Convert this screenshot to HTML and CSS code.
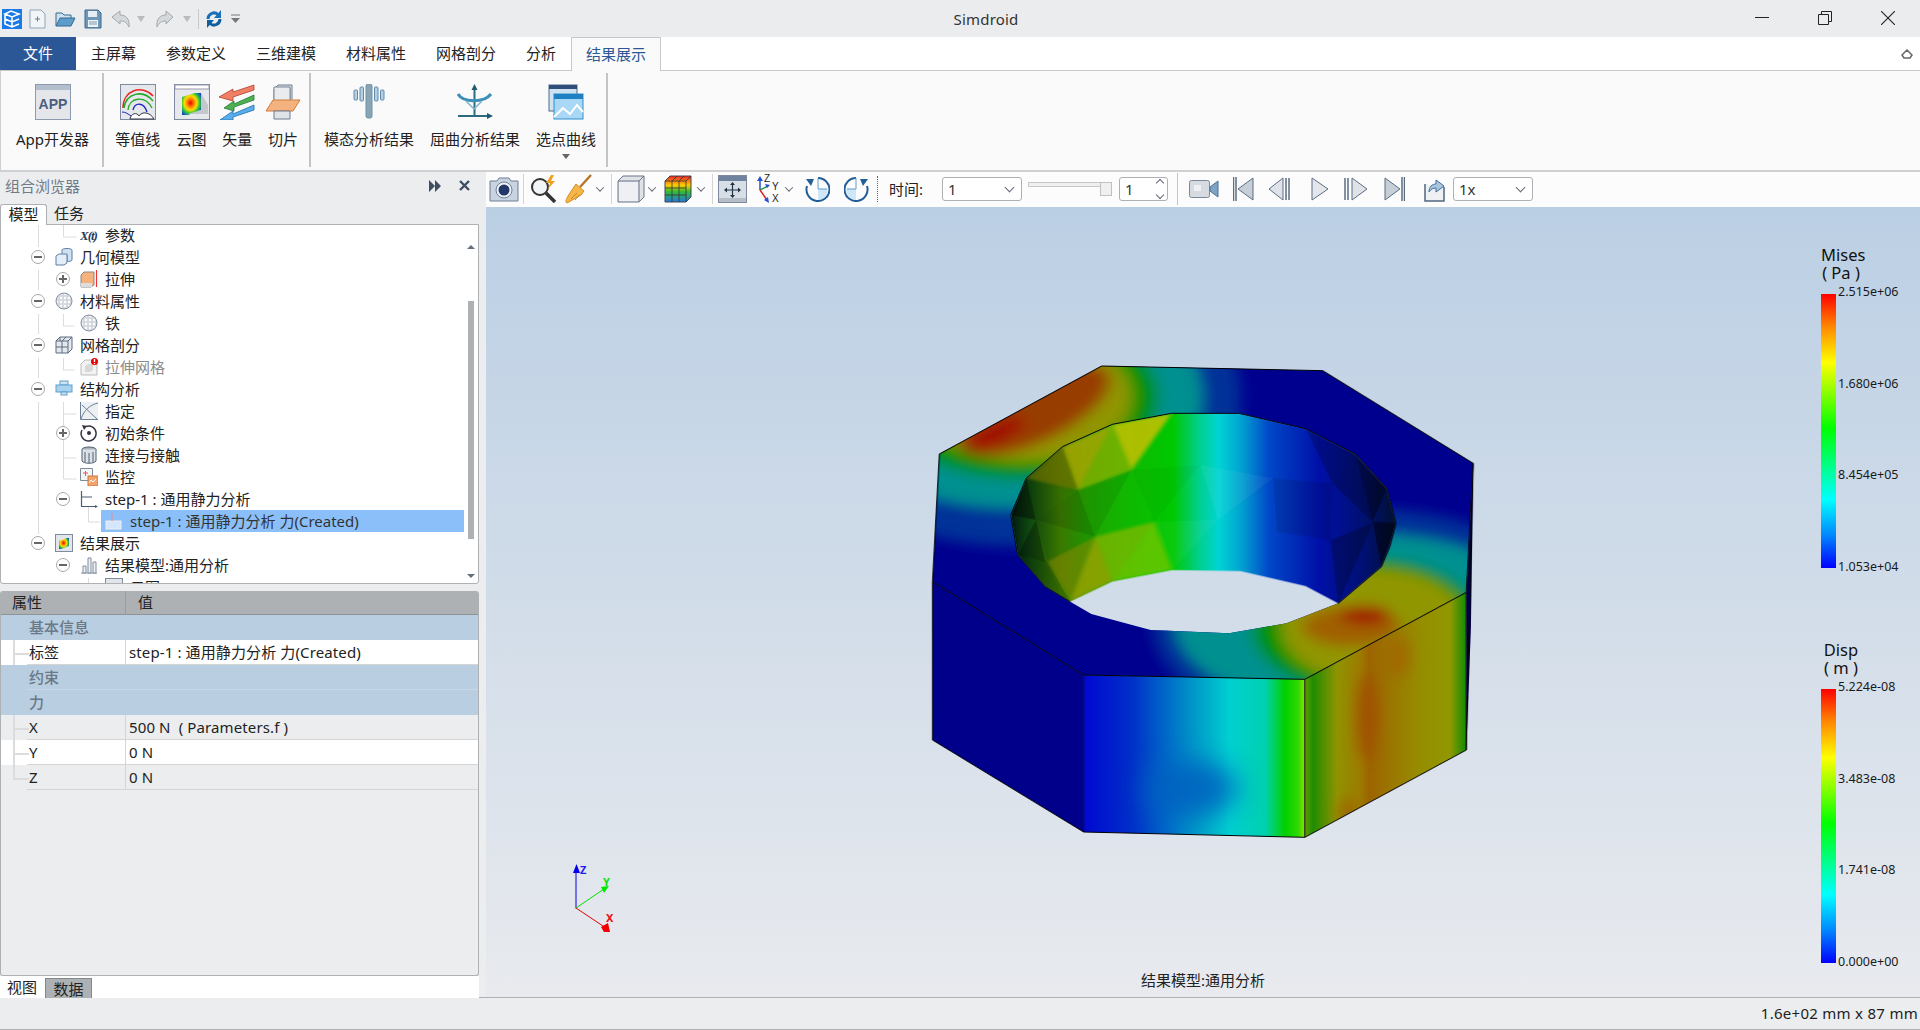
FILE: index.html
```html
<!DOCTYPE html>
<html lang="zh-CN">
<head>
<meta charset="utf-8">
<title>Simdroid</title>
<link rel="stylesheet" href="styles.css">
</head>
<body>
<div class="app">

  <header class="titlebar">
    <div class="qat">
      <svg class="q-logo" width="20" height="20" viewBox="0 0 20 20"><rect width="20" height="20" fill="#1c7ae6"/><path d="M3 5l6-3 8 3-7 3zM3 5v10l7 3 7-3M3 10l7 3 7-3M10 8v10" fill="none" stroke="#fff" stroke-width="1.6"/></svg>
      <svg class="q-new" width="17" height="20" viewBox="0 0 17 20"><path d="M1 1h11l4 4v14H1z" fill="#f2f5f8" stroke="#8fa3b5"/><path d="M6 10h5M8.500 7.500v5" stroke="#6a7f92"/></svg>
      <svg class="q-open" width="21" height="18" viewBox="0 0 21 18"><path d="M1 16V3h6l2 2h7v3" fill="#cfe0ee" stroke="#35688f"/><path d="M1 16l4-8h15l-4 8z" fill="#5d9ccb" stroke="#35688f"/></svg>
      <svg class="q-save" width="18" height="20" viewBox="0 0 18 20"><path d="M1 1h13l3 3v15H1z" fill="#6e97b8" stroke="#3f6a8c"/><rect x="4" y="2" width="9" height="6" fill="#e6eef4"/><rect x="4" y="11" width="10" height="7" fill="#eef3f7"/><path d="M5 13h8M5 15h8" stroke="#7d98ad"/></svg>
      <svg class="q-undo" width="20" height="18" viewBox="0 0 20 18"><path d="M1 7l8-6v4c6 0 10 4 9 12-2-4-4-6-9-6v3z" fill="#d5d8db" stroke="#a4a9ae"/></svg>
      <i class="q-caret q-c1"></i>
      <svg class="q-redo" width="18" height="18" viewBox="0 0 18 18"><path d="M17 7l-7-6v4C4 5 0 9 1 17c2-4 4-6 9-6v3z" fill="#d5d8db" stroke="#a4a9ae"/></svg>
      <i class="q-caret q-c2"></i>
      <i class="q-sep"></i>
      <svg class="q-sync" width="16" height="20" viewBox="0 0 16 20"><path d="M2 10a6 6 0 0 1 10-4.500" fill="none" stroke="#1a70b8" stroke-width="3"/><path d="M15 1v8H8z" fill="#1a70b8"/><path d="M14 10a6 6 0 0 1-10 4.500" fill="none" stroke="#0f5f9f" stroke-width="3"/><path d="M1 19v-8h7z" fill="#0f5f9f"/></svg>
      <svg class="q-more" width="9" height="9" viewBox="0 0 9 9"><path d="M0 1h9" stroke="#777"/><path d="M0 4h9L4.500 9z" fill="#777"/></svg>
    </div>
    <div class="title-text">Simdroid</div>
    <div class="winbtns">
      <svg width="14" height="14" viewBox="0 0 14 14"><path d="M0 6.500h14" stroke="#222"/></svg>
      <svg width="14" height="14" viewBox="0 0 14 14"><path d="M.5 3.500h10v10H.5zM3.500 3.500V.5h10v10h-3" fill="none" stroke="#222"/></svg>
      <svg width="14" height="14" viewBox="0 0 14 14"><path d="M0 0l14 14M14 0L0 14" stroke="#222" stroke-width="1.100"/></svg>
    </div>
  </header>

  <nav class="tabs">
    <div class="tab file">文件</div>
    <div class="tab">主屏幕</div>
    <div class="tab">参数定义</div>
    <div class="tab">三维建模</div>
    <div class="tab">材料属性</div>
    <div class="tab">网格剖分</div>
    <div class="tab">分析</div>
    <div class="tab active">结果展示</div>
    <svg class="collapse" width="12" height="11" viewBox="0 0 12 11"><path d="M1 6l5-5 5 5-2 3H3z" fill="none" stroke="#666" stroke-width="1.500"/></svg>
  </nav>

  <section class="ribbon">
    <div class="rgroup g1">
      <div class="ritem w100">
        <svg class="ric" viewBox="0 0 36 36"><rect x=".5" y=".5" width="35" height="35" fill="#e4e6ea" stroke="#8d9bb0"/><rect x="1" y="1" width="34" height="5" fill="#b4bfce"/><text x="18" y="25" text-anchor="middle" class="app-mark">APP</text></svg>
        <span>App开发器</span>
      </div>
    </div>
    <div class="rgroup g2">
      <div class="ritem w56">
        <svg class="ric" viewBox="0 0 36 36"><rect x=".5" y=".5" width="35" height="35" fill="#e4e7eb" stroke="#7f8ba0"/><path d="M3 24C3 6 22 0 33 12" fill="none" stroke="#e22" stroke-width="1.500"/><path d="M4 24C6 9 23 5 33 17" fill="none" stroke="#2a2" stroke-width="1.500"/><path d="M8 26C9 13 25 11 32 24" fill="none" stroke="#2a2" stroke-width="1.300"/><path d="M13 26c2-8 11-8 14 2" fill="none" stroke="#22b" stroke-width="1.300"/><path d="M2 28c4 0 6 2 9 4" fill="none" stroke="#22b"/><path d="M10 35c1-6 7-7 9-3 3-5 11-4 15 3z" fill="#fff" stroke="#334"/></svg>
        <span>等值线</span>
      </div>
      <div class="ritem w52">
        <svg class="ric" viewBox="0 0 36 36"><defs><radialGradient id="heat" cx=".45" cy=".45" r=".65"><stop offset="0" stop-color="#e00"/><stop offset=".3" stop-color="#f80"/><stop offset=".5" stop-color="#fd0"/><stop offset=".72" stop-color="#3c3"/><stop offset="1" stop-color="#14c"/></radialGradient><pattern id="dots" width="4" height="4" patternUnits="userSpaceOnUse"><circle cx="2" cy="2" r="1.200" fill="#fff"/></pattern></defs><rect x=".5" y=".5" width="35" height="35" fill="#e6e8ec" stroke="#7f8ba0"/><path d="M1 1h34v4H1z" fill="#fff" stroke="#99a"/><path d="M8 13l13-4h6v17l-13 5H8z" fill="url(#heat)"/><path d="M27 9l7 12v9H14l13-4z" fill="#c4c8cc"/></svg>
        <span>云图</span>
      </div>
      <div class="ritem w40">
        <svg class="ric" viewBox="0 0 36 36"><path d="M0 13l14-8v3l21-7v5L14 13v4z" fill="#ef8064" stroke="#b04030" stroke-width=".8"/><path d="M5 24l10-7v3l20-9v5L15 23v4z" fill="#50b050" stroke="#207838" stroke-width=".8"/><path d="M1 36l13-9v3l21-9v5L14 33v3z" fill="#58aeea" stroke="#2070b0" stroke-width=".8"/></svg>
        <span>矢量</span>
      </div>
      <div class="ritem w52">
        <svg class="ric" viewBox="0 0 36 36"><path d="M9 5l4-4h14v14H9z" fill="#d8dce2" stroke="#6c7a90"/><path d="M27 1v14l-2 2V5z" fill="#aab2bd"/><path d="M9 3h16v14H9z" fill="#e9ebee" stroke="#7a879b"/><path d="M8 16L1 27h27l7-11z" fill="#f3b27e" stroke="#d07a3a"/><path d="M9 27h16v8H9z" fill="#dfe3e8" stroke="#6c7a90"/></svg>
        <span>切片</span>
      </div>
    </div>
    <div class="rgroup g3">
      <div class="ritem w96">
        <svg class="ric" viewBox="0 0 36 36"><rect x="15" y="0" width="6" height="34" rx="2" fill="#8aa4b4" stroke="#6f95a8"/><rect x="9" y="3" width="3.500" height="14" rx="1" fill="#b8cfe0" stroke="#5f8db0"/><rect x="23.500" y="3" width="3.500" height="14" rx="1" fill="#b8cfe0" stroke="#5f8db0"/><rect x="3" y="6" width="3.500" height="10" rx="1" fill="#b8cfe0" stroke="#5f8db0"/><rect x="29.500" y="6" width="3.500" height="10" rx="1" fill="#b8cfe0" stroke="#5f8db0"/></svg>
        <span>模态分析结果</span>
      </div>
      <div class="ritem w116">
        <svg class="ric" viewBox="0 0 36 36"><path d="M17.500 3v29" stroke="#2c6a80" stroke-width="2"/><path d="M17.500 0l-3 6h6z" fill="#1e5a70"/><path d="M1 32h30" stroke="#2c6a80" stroke-width="2"/><path d="M36 32l-6-3v6z" fill="#1e5a70"/><path d="M1 10c5 9 26 9 33 0" fill="none" stroke="#3e8fb8" stroke-width="3"/><path d="M9 17l8 8 8-8" fill="none" stroke="#7fb2cc" stroke-width="1.500"/></svg>
        <span>屈曲分析结果</span>
      </div>
      <div class="ritem w66">
        <svg class="ric" viewBox="0 0 36 36"><rect x="1" y="1" width="28" height="26" fill="#cfe2f2" stroke="#4e6a8a"/><rect x="1" y="1" width="28" height="4" fill="#2f4f7a"/><rect x="6" y="10" width="29" height="25" fill="#a9d8f6" stroke="#2e8fcd"/><rect x="6" y="10" width="29" height="5" fill="#1f80c4"/><path d="M6 33l9-9 7 6 7-9 6 7" fill="none" stroke="#fff" stroke-width="2"/></svg>
        <span>选点曲线</span>
        <i class="r-caret"></i>
      </div>
    </div>
  </section>

  <main class="main">
    <aside class="left">
      <div class="dock-head">
        <span class="dock-title">组合浏览器</span>
        <svg class="dock-ic" width="12" height="12" viewBox="0 0 12 12"><path d="M0 0l6 6-6 6zM6 0l6 6-6 6z" fill="#3f4e60"/></svg>
        <svg class="dock-ic dock-x" width="11" height="11" viewBox="0 0 11 11"><path d="M1 1l9 9M10 1l-9 9" stroke="#3f4e60" stroke-width="2.400"/></svg>
      </div>
      <div class="ltabs"><div class="ltab on">模型</div><div class="ltab">任务</div></div>

      <div class="tree">
        <svg class="guides" width="120" height="360" viewBox="0 0 120 360"><path d="M38.500 0v22M38.500 45v20M38.500 89v20M38.500 133v20M38.500 177v132M63.500 0v12h13M63.500 89v12h11M63.500 133v12h11M63.500 177v12h13M63.500 188v45h13M63.500 220v34h13M88.500 281v16h12M88.500 353v7" fill="none" stroke="#dcdcdc"/></svg>
        <div class="tlist">
          <div class="row l1"><i class="tog none"></i><svg class="tic" viewBox="0 0 18 18"><text x="0" y="14" class="xt-mark">X(t)</text></svg><span>参数</span></div>
          <div class="row l0"><i class="tog"></i><svg class="tic" viewBox="0 0 18 18"><path d="M7 2c0-2 10-2 10 0v10c0 1-3 2-5 1V7H7z" fill="#cfe2f2" stroke="#5c7fa5"/><path d="M1 8l3-2h8v9l-3 2H1z" fill="#e3eef8" stroke="#5c7fa5"/></svg><span>几何模型</span></div>
          <div class="row l1"><i class="tog plus"></i><svg class="tic" viewBox="0 0 18 18"><path d="M1 5l3-3h10v13l-3 2H1z" fill="#f5b27c" stroke="#888"/><path d="M1 13h11v4H1z" fill="#ddd"/><path d="M16.500 0v17" stroke="#e33" stroke-width="1.200"/></svg><span>拉伸</span></div>
          <div class="row l0"><i class="tog"></i><svg class="tic" viewBox="0 0 18 18"><circle cx="9" cy="9" r="8" fill="#d4d8de" stroke="#8793a6"/><circle cx="9" cy="9" r="7" fill="url(#dots)"/></svg><span>材料属性</span></div>
          <div class="row l1"><i class="tog none"></i><svg class="tic" viewBox="0 0 18 18"><circle cx="9" cy="9" r="8" fill="#d4d8de" stroke="#8793a6"/><circle cx="9" cy="9" r="7" fill="url(#dots)"/></svg><span>铁</span></div>
          <div class="row l0"><i class="tog"></i><svg class="tic" viewBox="0 0 18 18"><path d="M1 5l4-4h12v12l-4 4H1z" fill="#e4e8ee" stroke="#5d6a7e"/><path d="M1 5h12v12M13 5l4-4M7 5v12M1 11h12M5 1v4M11 1l-4 4" fill="none" stroke="#5d6a7e"/></svg><span>网格剖分</span></div>
          <div class="row l1 dim"><i class="tog none"></i><svg class="tic" viewBox="0 0 18 18"><path d="M1 6l4-4h9l3 3v12H1z" fill="#f2f2f2" stroke="#bbb"/><path d="M5 8l3-2h5v6l-3 2H5z" fill="#d8d8d8"/><circle cx="14.500" cy="3.500" r="3.500" fill="#e80000"/><path d="M14.500 1v3" stroke="#fff" stroke-width="1.400"/><path d="M14.500 5v1" stroke="#fff" stroke-width="1.400"/></svg><span>拉伸网格</span></div>
          <div class="row l0"><i class="tog"></i><svg class="tic" viewBox="0 0 18 18"><rect x="5" y="1" width="8" height="4" fill="#cfe2f2" stroke="#5f9fcc"/><rect x="1" y="5" width="16" height="7" fill="#a9d2ee" stroke="#5f9fcc"/><rect x="6" y="12" width="6" height="3" fill="#cfe2f2" stroke="#5f9fcc"/></svg><span>结构分析</span></div>
          <div class="row l1"><i class="tog none"></i><svg class="tic" viewBox="0 0 18 18"><rect width="18" height="18" fill="#edf0f3"/><path d="M.5 0v17.500H18" fill="none" stroke="#6d8199"/><path d="M1 17C4 8 10 3 18 1M2 3l15 14" fill="none" stroke="#6d8199"/></svg><span>指定</span></div>
          <div class="row l1"><i class="tog plus"></i><svg class="tic" viewBox="0 0 18 18"><path d="M6 2.500A7.500 7.500 0 1 1 2 6" fill="none" stroke="#334" stroke-width="1.500"/><path d="M2 1l5 1-3 4z" fill="#334"/><circle cx="9" cy="9" r="2" fill="#334"/></svg><span>初始条件</span></div>
          <div class="row l1"><i class="tog none"></i><svg class="tic" viewBox="0 0 18 18"><ellipse cx="9" cy="3.500" rx="7" ry="2.500" fill="#a9b4bd" stroke="#50606e"/><path d="M2 3.500V15c2 3 12 3 14 0V3.500" fill="#dbe1e6" stroke="#50606e"/><path d="M5 6v10M9 7v10M13 6v10" stroke="#50606e"/></svg><span>连接与接触</span></div>
          <div class="row l1"><i class="tog none"></i><svg class="tic" viewBox="0 0 18 18"><path d="M.5.500h12v12H.5z" fill="#f3f5f7" stroke="#7f8b98"/><path d="M3 5h5M5.500 3v5" stroke="#e55"/><rect x="8" y="8" width="10" height="10" fill="#f2a46c" stroke="#d0753a"/><path d="M9 15l2-3 2 2 3-3" fill="none" stroke="#fff"/></svg><span>监控</span></div>
          <div class="row l1"><i class="tog"></i><svg class="tic" viewBox="0 0 18 18"><path d="M1.500 1v15.500H17" fill="none" stroke="#4a5d73" stroke-width="1.200"/><path d="M2 7h10" stroke="#4a5d73"/><path d="M15 15l3 1.500-3 1.500z" fill="#4a5d73"/></svg><span>step-1 : 通用静力分析</span></div>
          <div class="row sel"><svg class="tic" viewBox="0 0 18 18"><rect x="1" y="9" width="15" height="8" fill="#d3e6fb" stroke="#eee"/><path d="M7 1v8" stroke="#e88"/></svg><span>step-1 : 通用静力分析 力(Created)</span></div>
          <div class="row l0"><i class="tog"></i><svg class="tic" viewBox="0 0 18 18"><rect x=".5" y=".5" width="17" height="17" fill="#e2e5e9" stroke="#7f8ba0"/><path d="M4 7l8-3h2v8l-8 3H4z" fill="url(#heat)"/></svg><span>结果展示</span></div>
          <div class="row l1"><i class="tog"></i><svg class="tic" viewBox="0 0 18 18"><path d="M1 17h16" stroke="#889"/><path d="M3 10h3v7H3zM8 2h3v15H8zM13 6h3v11h-3z" fill="#eef1f4" stroke="#7f8ba0"/></svg><span>结果模型:通用分析</span></div>
          <div class="row l2"><svg class="tic" viewBox="0 0 18 18"><rect x=".5" y=".5" width="17" height="17" fill="#e2e5e9" stroke="#7f8ba0"/></svg><span>云图</span></div>
        </div>
        <div class="vscroll">
          <i class="arrow-up"></i>
          <i class="thumb"></i>
          <i class="arrow-down"></i>
        </div>
      </div>

      <div class="props">
        <div class="p-head"><div class="pc1">属性</div><div class="pc2">值</div></div>
        <div class="p-group">基本信息</div>
        <div class="p-row white"><div class="pc1">标签</div><div class="pc2">step-1 : 通用静力分析 力(Created)</div></div>
        <div class="p-group line">约束</div>
        <div class="p-group">力</div>
        <div class="p-row"><div class="pc1">X</div><div class="pc2">500 N&nbsp; ( Parameters.f )</div></div>
        <div class="p-row white"><div class="pc1">Y</div><div class="pc2">0 N</div></div>
        <div class="p-row last"><div class="pc1">Z</div><div class="pc2">0 N</div></div>
      </div>

      <div class="btabs"><div class="btab">视图</div><div class="btab on">数据</div></div>
    </aside>

    <div class="work">
      <div class="toolbar">
        <svg class="ti" width="30" height="26" viewBox="0 0 30 26"><path d="M1 5h7l2-3h10l2 3h7v20H1z" fill="#c9d4e0" stroke="#6d7f94"/><circle cx="15" cy="14" r="8" fill="#eef2f6" stroke="#6d7f94"/><circle cx="15" cy="14" r="5.500" fill="#22386a"/></svg>
        <i class="vsep"></i>
        <svg class="ti" width="30" height="28" viewBox="0 0 30 28"><circle cx="11" cy="12" r="8" fill="#f2f5f7" stroke="#333" stroke-width="2"/><path d="M17 18l9 9" stroke="#333" stroke-width="3.500"/><path d="M22 0l-5 8h4l-2 6 7-8h-4l3-6z" fill="#f0a020"/></svg>
        <svg class="ti" width="28" height="30" viewBox="0 0 28 30"><path d="M26 1L15 13" stroke="#b8762a" stroke-width="2.500"/><path d="M11 10l8 7-3 4-14 8c-2-1-1-3 1-7z" fill="#f4b646" stroke="#d68a20"/><path d="M6 25l6-6M10 26l4-5" stroke="#c9862a"/></svg>
        <i class="chev"></i>
        <i class="vsep"></i>
        <svg class="ti" width="28" height="28" viewBox="0 0 28 28"><path d="M1 6l5-5h21v21l-5 5H1z" fill="#dfe3e8" stroke="#6a7587"/><path d="M1 6h21v21" fill="none" stroke="#6a7587"/><path d="M22 6l5-5" stroke="#6a7587"/><rect x="2" y="7" width="19" height="19" fill="#eef0f3"/></svg>
        <i class="chev"></i>
        <svg class="ti" width="28" height="28" viewBox="0 0 28 28"><defs><linearGradient id="rb" x1="0" y1="0" x2="0" y2="1"><stop offset="0" stop-color="#e22"/><stop offset=".35" stop-color="#fc0"/><stop offset=".6" stop-color="#3b3"/><stop offset="1" stop-color="#27d"/></linearGradient></defs><path d="M1 6l5-5h21v21l-5 5H1z" fill="url(#rb)" stroke="#445"/><path d="M1 6h21v21M22 6l5-5M8 6v21M15 6v21M1 13h21M1 20h21M8 6l5-5M15 6l5-5" fill="none" stroke="#333" stroke-width=".8"/></svg>
        <i class="chev"></i>
        <i class="vsep"></i>
        <svg class="ti" width="29" height="28" viewBox="0 0 29 28"><rect x=".5" y=".5" width="28" height="27" fill="#d8dee6" stroke="#7d8a9e"/><rect x="1" y="1" width="27" height="5" fill="#6f83a0"/><rect x="1" y="23" width="27" height="4" fill="#b6bdc8"/><path d="M14.500 9v12M8 15h13" stroke="#234" stroke-width="1.200"/><path d="M14.500 7l-2.500 3h5zM14.500 23l-2.500-3h5zM6 15l3-2.500v5zM23 15l-3-2.500v5z" fill="#234"/></svg>
        <svg class="ti axes" width="24" height="30" viewBox="0 0 24 30"><path d="M4 16V5" stroke="#2a4fd0" stroke-width="1.500"/><path d="M4 16l8-4" stroke="#2a9a3a" stroke-width="1.500"/><path d="M4 16l7 10" stroke="#d22" stroke-width="1.500"/><path d="M4 2L1 7h6zM14 11l-5-1 2 4zM13 29l-1-6-4 3z" fill="#2a4fd0"/><text x="8" y="8" class="ax-t">Z</text><text x="16" y="16" class="ax-t">Y</text><text x="16" y="28" class="ax-t">X</text></svg>
        <i class="chev"></i>
        <svg class="ti" width="26" height="26" viewBox="0 0 26 26"><path d="M14 2a11.500 11.500 0 1 1-11 8" fill="none" stroke="#235f96" stroke-width="2"/><path d="M2 3h8l-3 7z" fill="#235f96"/><path d="M14 13h10a11 11 0 0 1-10 11z" fill="#cfe6f7"/><path d="M14 2v11h9" fill="none" stroke="#5f9fcc"/></svg>
        <svg class="ti" width="26" height="26" viewBox="0 0 26 26"><path d="M12 2a11.500 11.500 0 1 0 11 8" fill="none" stroke="#235f96" stroke-width="2"/><path d="M24 3h-8l3 7z" fill="#235f96"/><path d="M12 13H2a11 11 0 0 0 10 11z" fill="#cfe6f7"/><path d="M12 2v11H3" fill="none" stroke="#5f9fcc"/></svg>
        <i class="dsep"></i>
        <span class="t-label">时间:</span>
        <div class="combo c79"><span>1</span><i class="cchev"></i></div>
        <div class="slider"><i class="s-track"></i><i class="s-handle"></i></div>
        <div class="spin"><span>1</span><div class="spin-btns"><i class="sp-up"></i><i class="sp-dn"></i></div></div>
        <i class="vsep tall"></i>
        <svg class="ti" width="30" height="20" viewBox="0 0 30 20"><rect x=".5" y="1.500" width="20" height="17" rx="2" fill="#d6dbe1" stroke="#7a8899"/><rect x="5" y="6" width="7" height="6" fill="#eef0f3"/><path d="M21 8l8-6v16l-8-6z" fill="#7fa3c4" stroke="#4a7398"/></svg>
        <svg class="ti" width="21" height="24" viewBox="0 0 21 24"><path d="M.5 0v24M3 0v24" stroke="#5c6d82" stroke-width="1.500"/><path d="M5 12L20 1v22z" fill="#c6ced8" stroke="#5c6d82"/></svg>
        <svg class="ti" width="24" height="24" viewBox="0 0 24 24"><path d="M1 12l14-11v22z" fill="#dfe3e9" stroke="#5c6d82"/><path d="M18 1v22M21 1v22" stroke="#5c6d82" stroke-width="1.500"/></svg>
        <svg class="ti" width="18" height="24" viewBox="0 0 18 24"><path d="M1 1l16 11L1 23z" fill="#e3e7ec" stroke="#5c6d82"/></svg>
        <svg class="ti" width="24" height="24" viewBox="0 0 24 24"><path d="M1 1v22M4 1v22" stroke="#5c6d82" stroke-width="1.500"/><path d="M8 1l15 11L8 23z" fill="#dfe3e9" stroke="#5c6d82"/></svg>
        <svg class="ti" width="21" height="24" viewBox="0 0 21 24"><path d="M1 1l15 11L1 23z" fill="#c6ced8" stroke="#5c6d82"/><path d="M18 0v24M20.500 0v24" stroke="#5c6d82" stroke-width="1.500"/></svg>
        <svg class="ti" width="24" height="26" viewBox="0 0 24 26"><path d="M4 8v17h19V11" fill="#eef0f3" stroke="#4f6680" stroke-width="1.500"/><path d="M8 16c0-5 3-8 7-8V4l8 6-8 6v-4c-3 0-5 1-7 4z" fill="#a9c6de" stroke="#3f6f9c"/></svg>
        <div class="combo c79 last"><span>1x</span><i class="cchev"></i></div>
      </div>

      <div class="viewport">
        <svg class="model" viewBox="0 0 1568 1560" preserveAspectRatio="none">
          <defs>
            <filter id="b" filterUnits="userSpaceOnUse" x="-200" y="-200" width="2000" height="2000"><feGaussianBlur stdDeviation="19"/></filter>
            <filter id="b2" filterUnits="userSpaceOnUse" x="-200" y="-200" width="2000" height="2000"><feGaussianBlur stdDeviation="36"/></filter>
            <filter id="b3" filterUnits="userSpaceOnUse" x="-200" y="-200" width="2000" height="2000"><feGaussianBlur stdDeviation="5"/></filter>
            <clipPath id="topc"><path clip-rule="evenodd" d="M527 78L1105 92 1498 370 1480 757 1058 1018 480 1005 85 725 103 342zM445 785L380 740 308 645 290 525 330 415 425 320 555 253 710 220 885 220 1060 266 1190 342 1272 445 1296 550 1280 620 1258 680 1145 790 1010 850 860 880 655 870 500 822z"/></clipPath>
            <clipPath id="wallc"><path d="M445 785L380 740 308 645 290 525 330 415 425 320 555 253 710 220 885 220 1060 266 1190 342 1272 445 1296 550 1280 620 1258 680 1145 790 1060 738 890 693 712 690 555 725z"/></clipPath>
            <clipPath id="rightc"><path d="M1058 1018L1480 757 1480 1230 1058 1492z"/></clipPath>
            <clipPath id="frontc"><path d="M480 1005L1058 1018 1058 1492 480 1476z"/></clipPath>
            <linearGradient id="fg" gradientUnits="userSpaceOnUse" x1="480" y1="0" x2="1058" y2="0">
              <stop offset="0" stop-color="#0008d2"/><stop offset=".22" stop-color="#0030c8"/><stop offset=".5" stop-color="#0098c8"/><stop offset=".66" stop-color="#00d0d0"/><stop offset=".82" stop-color="#00d0b0"/><stop offset=".91" stop-color="#00d000"/><stop offset=".97" stop-color="#30d800"/><stop offset="1" stop-color="#90e000"/>
            </linearGradient>
            <linearGradient id="rg" gradientUnits="userSpaceOnUse" x1="1058" y1="0" x2="1480" y2="0">
              <stop offset="0" stop-color="#60a000"/><stop offset=".05" stop-color="#208c00"/><stop offset=".2" stop-color="#909400"/><stop offset=".34" stop-color="#9c7c00"/><stop offset=".4" stop-color="#9c6400"/><stop offset=".55" stop-color="#9a7800"/><stop offset=".7" stop-color="#968c00"/><stop offset=".9" stop-color="#909800"/><stop offset="1" stop-color="#108c00"/>
            </linearGradient>
            <linearGradient id="wg" gradientUnits="userSpaceOnUse" x1="290" y1="0" x2="1296" y2="0">
              <stop offset="0" stop-color="#001a10"/><stop offset=".05" stop-color="#104a10"/><stop offset=".13" stop-color="#408400"/><stop offset=".2" stop-color="#20a400"/><stop offset=".3" stop-color="#10b800"/><stop offset=".42" stop-color="#00c800"/><stop offset=".49" stop-color="#00d090"/><stop offset=".54" stop-color="#00d4d4"/><stop offset=".6" stop-color="#00a0d0"/><stop offset=".67" stop-color="#0048c8"/><stop offset=".8" stop-color="#0010a8"/><stop offset=".92" stop-color="#001070"/><stop offset="1" stop-color="#001030"/>
            </linearGradient>
          </defs>

          <path d="M1498 370L1492 860 1480 1230 1480 757z" fill="#00004a"/>
          <path d="M85 725L480 1005 480 1476 85 1200z" fill="#00008b"/>

          <g clip-path="url(#frontc)">
            <rect x="480" y="1005" width="578" height="490" fill="url(#fg)"/>
            <ellipse cx="760" cy="1345" rx="120" ry="85" fill="#0060c0" opacity=".85" filter="url(#b2)"/>
          </g>

          <g clip-path="url(#rightc)">
            <rect x="1058" y="750" width="422" height="750" fill="url(#rg)"/>
            <g filter="url(#b)">
              <ellipse cx="1220" cy="1130" rx="24" ry="130" fill="#a05000"/>
              <ellipse cx="1300" cy="950" rx="30" ry="60" fill="#a06800"/>
              <ellipse cx="1170" cy="1420" rx="16" ry="50" fill="#a05800"/>
            </g>
          </g>

          <g clip-path="url(#topc)">
            <rect x="0" y="0" width="1568" height="1100" fill="#00008f"/>
            <g filter="url(#b)">
              <ellipse cx="300" cy="170" rx="590" ry="450" fill="#003098"/>
              <ellipse cx="300" cy="170" rx="490" ry="335" fill="#009090"/>
              <ellipse cx="310" cy="170" rx="365" ry="245" fill="#009000"/>
              <ellipse cx="320" cy="170" rx="285" ry="195" fill="#909600"/>
              <ellipse cx="350" cy="210" rx="225" ry="95" transform="rotate(-30 350 210)" fill="#983c00"/>
              <ellipse cx="250" cy="280" rx="85" ry="30" transform="rotate(-30 250 280)" fill="#a00800"/>
              <ellipse cx="1210" cy="850" rx="550" ry="345" fill="#003098"/>
              <ellipse cx="1210" cy="850" rx="490" ry="270" fill="#009090"/>
              <ellipse cx="1220" cy="860" rx="300" ry="205" fill="#009000"/>
              <ellipse cx="1240" cy="860" rx="245" ry="175" fill="#909600"/>
              <ellipse cx="1180" cy="860" rx="130" ry="60" fill="#a06000"/>
              <ellipse cx="1215" cy="825" rx="65" ry="28" fill="#a01800"/>
            </g>
          </g>

          <g clip-path="url(#wallc)">
            <rect x="280" y="210" width="1030" height="600" fill="url(#wg)"/>
            <g filter="url(#b3)">
              <path d="M555 253L710 220 605 390z" fill="#c8c000" opacity=".85"/>
              <path d="M425 320L555 253 465 450z" fill="#a8a400" opacity=".85"/>
              <path d="M555 253L605 390 465 450z" fill="#a8b000" opacity=".6"/>
              <path d="M510 590L665 545 555 725z" fill="#a0b800" opacity=".6"/>
              <path d="M555 725L665 545 712 690z" fill="#a0c800" opacity=".55"/>
              <path d="M445 785L510 590 555 725z" fill="#a8a000" opacity=".75"/>
              <path d="M385 665L510 590 445 785z" fill="#808000" opacity=".6"/>
              <path d="M330 415L425 320 465 450z" fill="#787800" opacity=".7"/>
            </g>
            <path d="M330 415L425 320 465 450z" fill="#000" opacity=".08"/>
            <path d="M330 415L465 450 355 540z" fill="#000" opacity=".15"/>
            <path d="M290 525L330 415 355 540z" fill="#000" opacity=".4"/>
            <path d="M355 540L308 645 380 665z" fill="#000" opacity=".3"/>
            <path d="M465 450L605 390 510 590z" fill="#000" opacity=".08"/>
            <path d="M355 540L465 450 510 590z" fill="#000" opacity=".18"/>
            <path d="M355 540L510 590 385 665z" fill="#000" opacity=".08"/>
            <path d="M605 390L785 375 665 545z" fill="#000" opacity=".03"/>
            <path d="M665 545L830 540 712 690z" fill="#fff" opacity=".04"/>
            <path d="M975 415L1130 430 1125 600 985 575z" fill="#000" opacity=".1"/>
            <path d="M1060 266L1190 342 1130 430z" fill="#000" opacity=".2"/>
            <path d="M1130 430L1190 342 1235 545z" fill="#000" opacity=".22"/>
            <path d="M1190 342L1272 445 1235 545z" fill="#000" opacity=".4"/>
            <path d="M1125 600L1235 550 1145 790z" fill="#000" opacity=".25"/>
            <path d="M1235 545L1296 550 1258 680z" fill="#000" opacity=".45"/>
            <path d="M785 375L975 415 830 540z" fill="#fff" opacity=".05"/>
            <path d="M380 740L308 645 385 665 445 785z" fill="#000" opacity=".18"/>
          </g>

          <g fill="none" stroke="#000">
            <path vector-effect="non-scaling-stroke" d="M527 78L1105 92 1498 370 1480 757 1058 1018 480 1005 85 725 103 342z"/>
            <path vector-effect="non-scaling-stroke" d="M445 785L380 740 308 645 290 525 330 415 425 320 555 253 710 220 885 220 1060 266 1190 342 1272 445 1296 550 1280 620 1258 680 1145 790"/>
            <path vector-effect="non-scaling-stroke" d="M85 725V1200L480 1476 1058 1492 1480 1230V757M480 1005V1476M1058 1018V1492M1498 370L1480 1230"/>
          </g>
        </svg>

        <svg class="triad" width="50" height="72" viewBox="0 0 50 72">
          <path d="M8 46.500V8" stroke="#0000e0"/><path d="M8 46L36 27" stroke="#00e000"/><path d="M8 46L38 66" stroke="#e00000"/>
          <path d="M8.500 2L5 11h7z" fill="#0000f0"/>
          <path d="M41 24l-8 1 3 6z" fill="#00e800"/>
          <path d="M42 70l-2-9-7 4 3 5z" fill="#f00000"/>
          <text x="12" y="12" class="tx z">Z</text><text x="35" y="24" class="tx y">Y</text><text x="38" y="60" class="tx x">X</text>
        </svg>

        <div class="legend mises">
          <div class="l-title">Mises<br>( Pa )</div>
          <div class="l-body">
            <i class="l-bar"></i>
            <div class="l-labels"><span>2.515e+06</span><span>1.680e+06</span><span>8.454e+05</span><span>1.053e+04</span></div>
          </div>
        </div>
        <div class="legend disp">
          <div class="l-title">Disp<br>( m )</div>
          <div class="l-body">
            <i class="l-bar"></i>
            <div class="l-labels"><span>5.224e-08</span><span>3.483e-08</span><span>1.741e-08</span><span>0.000e+00</span></div>
          </div>
        </div>
        <div class="caption">结果模型:通用分析</div>
      </div>
    </div>
  </main>

  <footer class="status">1.6e+02 mm x 87 mm</footer>
</div>
</body>
</html>
```

FILE: styles.css
```css
* { box-sizing: border-box; }
html, body { margin: 0; height: 100%; overflow: hidden; }
body {
  font-family: "Noto Sans", "Noto Sans CJK SC", sans-serif;
  font-size: 15px;
  color: #222;
  background: #ecedef;
}
i { display: block; font-style: normal; }
svg { display: block; flex: none; }

.app { width: 1920px; height: 1030px; display: flex; flex-direction: column; }

/* title bar */
.titlebar { height: 37px; flex: none; background: #ebecee; display: flex; align-items: center; position: relative; }
.qat { display: flex; align-items: center; padding-left: 2px; padding-top: 0; height: 37px; }
.q-new { margin-left: 7px; }
.q-open { margin-left: 9px; }
.q-save { margin-left: 8px; }
.q-undo { margin-left: 9px; }
.q-redo { margin-left: 11px; }
.q-caret { width: 0; height: 0; border-left: 4.500px solid transparent; border-right: 4.500px solid transparent; border-top: 6px solid #bbb; margin-left: 6px; }
.q-c2 { margin-left: 9px; }
.q-sep { width: 1px; height: 20px; background: #c8c8c8; margin-left: 7px; }
.q-sync { margin-left: 7px; }
.q-more { margin-left: 9px; }
.title-text { position: absolute; left: 0; right: 0; top: 9px; text-align: center; line-height: 20px; font-size: 15px; color: #333; padding-left: 52px; letter-spacing: .2px; }
.winbtns { margin-left: auto; display: flex; gap: 49px; padding-right: 25px; margin-top: -2px; }

/* tabs */
.tabs { height: 34px; flex: none; background: #fff; display: flex; align-items: stretch; position: relative; border-bottom: 1px solid #c8c8c8; }
.tab { padding: 0 15px; line-height: 32px; color: #222; white-space: nowrap; }
.tab.file { width: 76px; padding: 0; text-align: center; background: #2b5797; color: #fff; height: 33px; margin-right: 0; }
.tab.active { background: #fafafa; color: #2b5797; border: 1px solid #c8c8c8; border-bottom: 0; height: 34px; padding: 0 14px; position: relative; }
.collapse { margin-left: auto; margin-right: 7px; margin-top: 12px; }

/* ribbon */
.ribbon { height: 101px; flex: none; background: #fafafa; border-bottom: 2px solid #d0d0d0; border-left: 1px solid #d0d0d0; display: flex; padding-left: 2px; padding-top: 2px; }
.rgroup { display: flex; height: 94px; border-right: 2px solid #c4c4c4; }
.g1 { width: 101px; }
.g2 { width: 207px; padding-left: 6px; }
.g3 { width: 297px; padding-left: 10px; }
.ritem { display: flex; flex-direction: column; align-items: center; padding-top: 11px; position: relative; white-space: nowrap; line-height: 18px; }
.ritem > span { margin-top: 10px; }
.ric { width: 36px; height: 36px; }
.w100 { width: 100px; }
.w56 { width: 56px; }
.w52 { width: 52px; }
.w40 { width: 40px; }
.w96 { width: 96px; }
.w116 { width: 116px; }
.w66 { width: 66px; }
.r-caret { width: 0; height: 0; border-left: 4px solid transparent; border-right: 4px solid transparent; border-top: 5px solid #666; margin-top: 6px; }
.app-mark { font-family: "Liberation Sans", sans-serif; font-size: 14px; font-weight: 700; fill: #4a5f7d; }

/* main */
.main { flex: 1; min-height: 0; display: flex; }
.left { width: 486px; flex: none; background: #ecedef; display: flex; flex-direction: column; padding-right: 7px; }
.dock-head { height: 28px; display: flex; align-items: center; padding-left: 5px; padding-bottom: 1px; flex: none; }
.dock-title { color: #6f7b88; flex: 1; }
.dock-ic { margin-right: 0; }
.dock-x { margin-left: 18px; margin-right: 9px; }

.ltabs { height: 24px; display: flex; flex: none; padding-top: 4px; align-items: stretch; position: relative; }
.ltab { padding: 0; line-height: 18px; }
.ltab.on { width: 47px; background: #fff; border: 1px solid #adb1b4; border-bottom: 0; border-radius: 3px 3px 0 0; margin-bottom: -1px; text-align: center; padding: 0; margin-right: 7px; z-index: 1; }

.tree { height: 360px; flex: none; background: #fff; border: 1px solid #adb1b4; border-radius: 0 0 3px 3px; display: flex; position: relative; overflow: hidden; }
.guides { position: absolute; left: -1px; top: 0; }
.tlist { flex: 1; min-width: 0; position: relative; margin-top: -1px; }
.row { height: 22px; display: flex; align-items: center; white-space: nowrap; line-height: 22px; }
.row.l0 { padding-left: 30px; }
.row.l1 { padding-left: 55px; }
.row.l2 { padding-left: 104px; }
.row.dim { color: #8b8b8b; }
.row.sel { margin-left: 100px; padding-left: 4px; background: #8bbffa; color: #333; }
.tog { width: 14px; height: 14px; border: 1px solid #a8a8a8; border-radius: 50%; margin-right: 10px; position: relative; background: #fff; flex: none; }
.tog::before { content: ""; position: absolute; left: 2px; right: 2px; top: 5px; height: 2px; background: #666; }
.tog.plus::after { content: ""; position: absolute; top: 2px; bottom: 2px; left: 5px; width: 2px; background: #666; }
.tog.none { visibility: hidden; }
.tic { width: 18px; height: 18px; margin-right: 7px; flex: none; }
.xt-mark { font-family: "Liberation Serif", serif; font-size: 13px; font-style: italic; font-weight: 700; fill: #2b3a58; letter-spacing: -1px; }

.vscroll { width: 14px; flex: none; display: flex; flex-direction: column; align-items: center; position: relative; }
.arrow-up { width: 0; height: 0; border-left: 4px solid transparent; border-right: 4px solid transparent; border-bottom: 4px solid #66707c; margin-top: 20px; }
.thumb { width: 6px; height: 238px; background: #adb1b4; margin-top: 52px; }
.arrow-down { width: 0; height: 0; border-left: 4px solid transparent; border-right: 4px solid transparent; border-top: 4px solid #66707c; margin-top: 35px; }

.props { flex: none; height: 385px; margin-top: 7px; border: 1px solid #adb1b4; border-top: 0; border-radius: 3px; background: #ecedef; overflow: hidden; }
.p-head { height: 24px; background: #adb1b4; display: flex; line-height: 22px; border-bottom: 1px solid #8f9498; }
.p-head .pc1 { width: 125px; padding-left: 11px; border-right: 1px solid #999ea2; }
.p-head .pc2 { padding-left: 12px; }
.p-group { height: 25px; line-height: 25px; background: #b9cee0; padding-left: 28px; color: #6a7888; font-weight: 500; position: relative; }
.p-group.line::after { content: ""; position: absolute; left: 26px; right: 0; bottom: 0; height: 1px; background: #c9d8e6; }
.p-row { height: 25px; display: flex; line-height: 24px; position: relative; background: #ecedef; padding-left: 26px; }
.p-row.white { background: #fff; }
.p-row::before { content: ""; position: absolute; left: 12px; top: 0; width: 14px; height: 13px; border-left: 2px solid #dcdcdc; border-bottom: 2px solid #dcdcdc; }
.p-row::after { content: ""; position: absolute; left: 12px; top: 13px; bottom: 0; width: 2px; background: #dcdcdc; }
.p-row.last::after { display: none; }
.p-row .pc1 { width: 99px; padding-left: 2px; border-right: 1px solid #d5d5d5; border-bottom: 1px solid #d5d5d5; }
.p-row .pc2 { flex: 1; padding-left: 3px; border-bottom: 1px solid #d5d5d5; letter-spacing: .12px; }
.btabs { flex: none; height: 22px; background: #fff; display: flex; padding-left: 7px; align-items: flex-end; position: relative; }
.btab { width: 38px; line-height: 18px; height: 20px; white-space: nowrap; }
.btab.on { width: 47px; background: #adb1b4; border: 1px solid #808890; border-bottom: 0; text-align: center; line-height: 20px; }

/* work area */
.work { flex: 1; min-width: 0; display: flex; flex-direction: column; }
.toolbar { height: 35px; flex: none; background: #fcfcfc; display: grid; align-items: center; justify-items: center; padding-bottom: 2px; border-top: 0;
  grid-template-columns: 35px 4px 37px 34px 13px 4px 35px 11px 38px 13px 4px 37px 34px 10px 44px 35px 6px 52px 93px 90px 57px 10px 43px 36px 38px 41px 32px 45px 32px 90px; }
.vsep { width: 1px; height: 30px; background: #d4d4d4; }
.vsep.tall { height: 32px; background: #c4c4c4; }
.dsep { width: 0; height: 26px; border-left: 1px dotted #666; }
.chev { width: 6px; height: 6px; border-right: 1px solid #667; border-bottom: 1px solid #667; transform: rotate(45deg) translate(-1px,-1px); justify-self: start; margin-left: 1px; }
.ax-t { font-family: "Liberation Sans", sans-serif; font-size: 10px; fill: #222; }
.t-label { white-space: nowrap; font-size: 15px; }
.combo { height: 24px; background: #fff; border: 1px solid #adb1b4; border-radius: 3px; display: flex; align-items: center; padding: 0 8px 0 5px; justify-content: space-between; justify-self: end; color: #333; line-height: 20px; }
.c79 { width: 80px; margin-right: 3px; }
.combo.last { justify-self: start; margin-left: 4px; margin-right: 0; }
.cchev { width: 7px; height: 7px; border-right: 1px solid #667; border-bottom: 1px solid #667; transform: rotate(45deg); margin-top: -3px; }
.slider { width: 84px; height: 16px; position: relative; justify-self: start; margin-left: 3px; }
.s-track { position: absolute; left: 0; right: 0; top: 1px; height: 5px; background: #efefef; border: 1px solid #c8c8c8; }
.s-handle { position: absolute; right: 0; top: 1px; width: 12px; height: 14px; background: #f0f0f0; border: 1px solid #c0c0c0; }
.spin { width: 49px; height: 24px; background: #fff; border: 1px solid #adb1b4; border-radius: 3px; display: flex; align-items: center; justify-content: space-between; padding-left: 5px; color: #333; line-height: 20px; justify-self: center; }
.spin-btns { width: 14px; display: flex; flex-direction: column; align-items: center; gap: 6px; }
.sp-up, .sp-dn { width: 6px; height: 6px; border-right: 1px solid #667; border-bottom: 1px solid #667; }
.sp-up { transform: rotate(225deg); margin-top: 3px; }
.sp-dn { transform: rotate(45deg); margin-bottom: 2px; }

.viewport { flex: 1; min-height: 0; position: relative; overflow: hidden; background: linear-gradient(#bbcfe4, #e8eaee); }
.model { position: absolute; left: 414px; top: 133px; width: 600px; height: 520px; }
.triad { position: absolute; left: 82px; top: 655px; overflow: visible; }
.tx { font-family: "Noto Sans", sans-serif; font-size: 11px; font-weight: 700; }
.tx.z { fill: #1c1cf0; }
.tx.y { fill: #0ee00e; }
.tx.x { fill: #f01010; }
.legend { position: absolute; left: 1335px; }
.legend.mises { top: 39px; }
.legend.disp { top: 434px; }
.l-title { width: 40px; text-align: center; white-space: nowrap; line-height: 18px; font-size: 16.500px; margin-bottom: 12px; color: #111; }
.l-body { display: flex; align-items: flex-start; }
.l-bar { width: 15px; height: 274px; flex: none; background: linear-gradient(#f00 0%, #f80 12%, #ff0 25%, #0f0 49%, #0ff 75%, #08f 88%, #00f 100%); }
.l-labels { height: 289px; margin-top: -9px; margin-left: 2px; display: flex; flex-direction: column; justify-content: space-between; font-size: 12.500px; line-height: 14px; color: #1a1a1a; white-space: nowrap; }
.caption { position: absolute; left: 0; width: 1434px; text-align: center; top: 764px; line-height: 18px; font-size: 15px; color: #222; }

.status { height: 33px; flex: none; background: #ecedef; border-top: 1px solid #adb1b4; border-bottom: 1px solid #adb1b4; text-align: right; line-height: 30px; padding-right: 2px; color: #222; white-space: nowrap; letter-spacing: .28px; }
```
